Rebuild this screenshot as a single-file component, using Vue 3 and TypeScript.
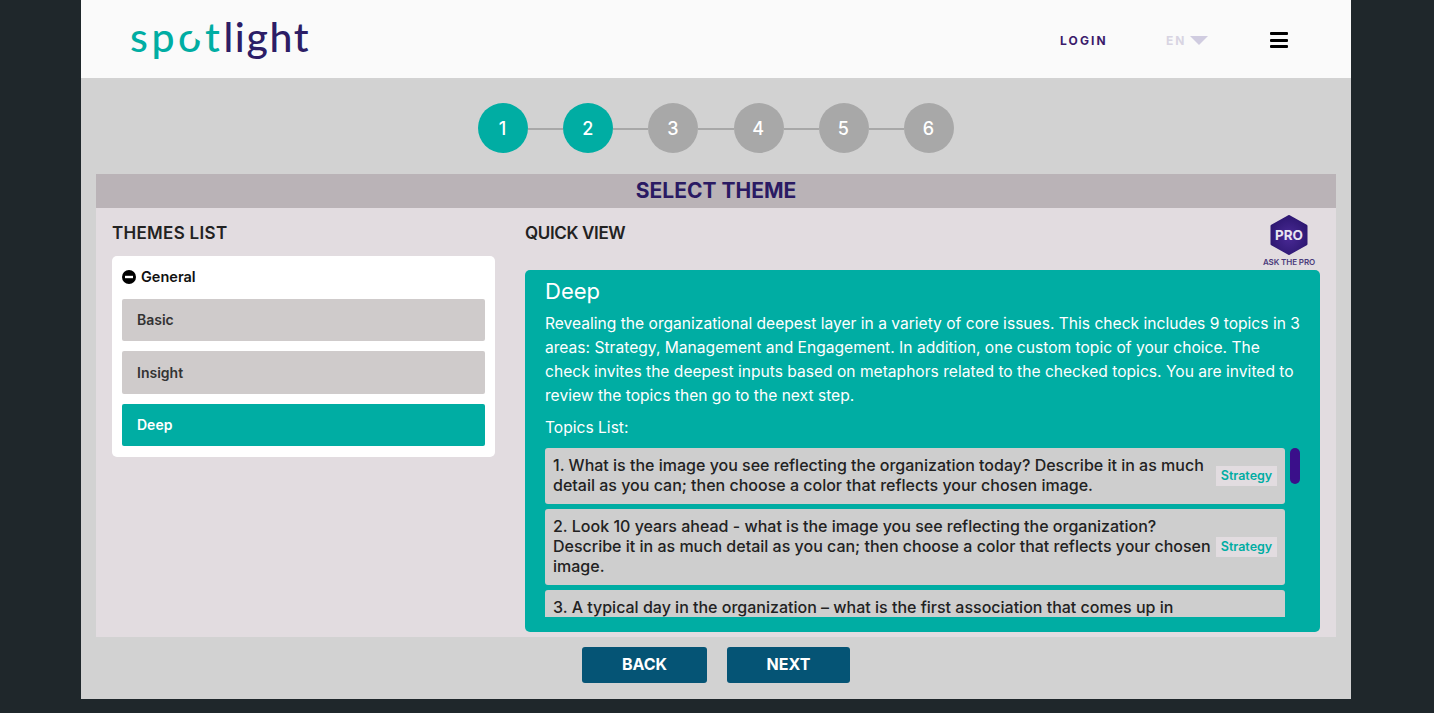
<script setup lang="ts">
const steps = [
  { n: 1, on: true },
  { n: 2, on: true },
  { n: 3, on: false },
  { n: 4, on: false },
  { n: 5, on: false },
  { n: 6, on: false },
]
const themes = [
  { name: 'Basic', on: false },
  { name: 'Insight', on: false },
  { name: 'Deep', on: true },
]
const topics = [
  { text: '1. What is the image you see reflecting the organization today? Describe it in as much detail as you can; then choose a color that reflects your chosen image.', tag: true },
  { text: '2. Look 10 years ahead - what is the image you see reflecting the organization? Describe it in as much detail as you can; then choose a color that reflects your chosen image.', tag: true },
  { text: '3. A typical day in the organization – what is the first association that comes up in', tag: false },
]
</script>

<template>
  <div class="shell">
    <header class="top">
      <div class="logo">
        <span class="teal spot">sp<span class="o">o<i class="gap"></i></span>t</span><span class="navy light">light</span>
      </div>
      <nav class="nav">
        <a class="login">LOGIN</a>
        <span class="lang">EN<i class="caret"></i></span>
        <span class="burger"><i></i><i></i><i></i></span>
      </nav>
    </header>

    <main class="main">
      <div class="steps">
        <template v-for="(s, i) in steps" :key="s.n">
          <span v-if="i > 0" class="line"></span>
          <span class="dot" :class="{ on: s.on }">{{ s.n }}</span>
        </template>
      </div>

      <section class="panel">
        <h1 class="bar">SELECT THEME</h1>
        <div class="cols">
          <div class="left">
            <h2 class="head themes">THEMES LIST</h2>
            <div class="card">
              <div class="group">
                <svg class="minus" viewBox="0 0 14 14" width="14" height="14">
                  <circle cx="7" cy="7" r="7" fill="#000" />
                  <rect x="3" y="5.8" width="8" height="2.4" fill="#fff" />
                </svg>
                General
              </div>
              <div v-for="t in themes" :key="t.name" class="theme" :class="{ on: t.on }">{{ t.name }}</div>
            </div>
          </div>

          <div class="right">
            <div class="rhead">
              <h2 class="head quick">QUICK VIEW</h2>
              <div class="pro">
                <svg viewBox="0 0 38 40" width="38" height="40">
                  <defs>
                    <radialGradient id="hex" cx="50%" cy="55%" r="60%">
                      <stop offset="0" stop-color="#4a2a96" />
                      <stop offset="1" stop-color="#2c1670" />
                    </radialGradient>
                  </defs>
                  <polygon points="19,1.5 36,11 36,29 19,38.5 2,29 2,11" fill="url(#hex)" stroke="url(#hex)" stroke-width="3" stroke-linejoin="round" />
                  <text x="19" y="25" text-anchor="middle" class="protxt">PRO</text>
                </svg>
                <span class="ask">ASK THE PRO</span>
              </div>
            </div>

            <div class="view">
              <h3 class="title">Deep</h3>
              <p class="desc">Revealing the organizational deepest layer in a variety of core issues. This check includes 9 topics in 3 areas: Strategy, Management and Engagement. In addition, one custom topic of your choice. The check invites the deepest inputs based on metaphors related to the checked topics. You are invited to review the topics then go to the next step.</p>
              <p class="tl">Topics List:</p>
              <div class="scroll">
                <div class="list">
                  <div v-for="t in topics" :key="t.text" class="item" :class="{ cut: !t.tag }">
                    <span class="q">{{ t.text }}</span>
                    <span v-if="t.tag" class="tag">Strategy</span>
                  </div>
                </div>
                <div class="track"><i class="thumb"></i></div>
              </div>
            </div>
          </div>
        </div>
      </section>

      <div class="actions">
        <button class="btn back">BACK</button>
        <button class="btn next">NEXT</button>
      </div>
    </main>
  </div>
</template>

<style>
html, body { margin: 0; background: #1f272b; overflow: hidden; }
</style>

<style scoped>
.shell { width: 1270px; height: 699px; margin: 0 0 0 81px; display: flex; flex-direction: column; font-family: Inter, "Noto Sans", sans-serif; background: #d2d2d2; color: #222; }
.top { height: 78px; flex: none; background: #fafafa; display: flex; align-items: center; justify-content: space-between; padding: 0 63px 0 49px; }
.logo { font-family: Lato, "Open Sans", sans-serif; font-size: 41px; line-height: 44px; margin-top: -5px; font-weight: 500; white-space: nowrap; }
.teal { color: #00ada3; }
.navy { color: #2c1d66; }
.spot { letter-spacing: 3.6px; }
.light { letter-spacing: 1.6px; }
.o { position: relative; display: inline-block; }
.gap { position: absolute; right: 2px; top: 14px; width: 11px; height: 10px; background: #fafafa; transform: rotate(30deg); }
.nav { display: flex; align-items: center; margin-top: 2px; }
.login { font-size: 12px; font-weight: 700; letter-spacing: 2.1px; color: #3b1a6b; width: 106px; }
.lang { font-size: 12px; font-weight: 700; letter-spacing: 2px; color: #d8d4e2; display: flex; align-items: center; width: 104px; }
.caret { width: 0; height: 0; border-left: 9px solid transparent; border-right: 9px solid transparent; border-top: 9px solid #d0cce0; margin-left: 4px; }
.burger { width: 18px; display: flex; flex-direction: column; gap: 3.5px; }
.burger i { display: block; height: 3px; background: #000; border-radius: 1px; }

.main { flex: 1; display: flex; flex-direction: column; align-items: center; padding: 25px 15px 0; min-height: 0; }
.steps { display: flex; align-items: center; height: 50px; flex: none; }
.dot { width: 50px; height: 50px; box-sizing: border-box; padding-right: 1px; border-radius: 50%; background: #a8a8a8; color: #fff; font-size: 18px; font-weight: 500; display: flex; align-items: center; justify-content: center; flex: none; }
.dot.on { background: #00ada3; }
.line { width: 35.2px; height: 2px; background: #a8a8a8; margin-top: 1px; }

.panel { width: 100%; margin-top: 21px; height: 463px; flex: none; background: #e2dce0; display: flex; flex-direction: column; }
.bar { margin: 0; height: 34px; flex: none; background: #bab3b7; color: #2a1a63; font-size: 21px; line-height: 34px; font-weight: 700; text-align: center; }
.cols { flex: 1; display: flex; padding: 0 16px; gap: 30px; min-height: 0; }
.left { width: 383px; flex: none; }
.head { margin: 0; font-size: 17px; line-height: 24px; font-weight: 600; color: #222; }
.themes { letter-spacing: 0.3px; }
.quick { letter-spacing: -0.35px; }
.left .head { margin-top: 13px; }
.card { margin-top: 11px; background: #fff; border-radius: 5px; padding: 10px; display: flex; flex-direction: column; gap: 10px; height: 201px; box-sizing: border-box; }
.group { display: flex; align-items: center; gap: 5px; font-size: 14.5px; line-height: 22px; font-weight: 600; color: #111; margin-bottom: 1px; height: 22px; }
.theme { height: 42.4px; background: #cfcbcb; border-radius: 2px; padding: 0 15px 1px; box-sizing: border-box; display: flex; align-items: center; font-size: 14px; font-weight: 600; color: #333; }
.theme.on { background: #00ada3; color: #fff; }

.right { flex: 1; min-width: 0; display: flex; flex-direction: column; }
.rhead { height: 62px; flex: none; display: flex; justify-content: space-between; }
.rhead .head { margin-top: 13px; }
.pro { width: 54px; margin-top: 7px; display: flex; flex-direction: column; align-items: center; margin-right: 4px; }
.protxt { fill: #e8e4f0; font-family: Inter, sans-serif; font-size: 13.5px; font-weight: 700; }
.ask { font-size: 8px; line-height: 10px; margin-top: 2px; font-weight: 600; color: #4a3a7a; white-space: nowrap; letter-spacing: -0.1px; }

.view { flex: 1; min-height: 0; margin-bottom: 5px; background: #00ada3; border-radius: 5px; padding: 7px 20px 15px; color: #fff; display: flex; flex-direction: column; }
.title { margin: 0; font-size: 22px; line-height: 28px; font-weight: 400; }
.desc { margin: 7px 0 0; font-size: 15.6px; line-height: 24px; }
.tl { margin: 8px 0 0; font-size: 15.6px; line-height: 24px; }
.scroll { margin-top: 8px; flex: 1; min-height: 0; display: flex; gap: 5px; }
.list { width: 740px; flex: none; display: flex; flex-direction: column; gap: 5px; overflow: hidden; }
.item { flex: none; background: #cecece; border-radius: 3px; padding: 7px 8px 9px; display: flex; align-items: center; gap: 5px; color: #222; }
.item.cut { padding-bottom: 0; border-radius: 3px 3px 0 0; }
.q { flex: 1; font-size: 16px; line-height: 20px; font-weight: 500; }
.tag { flex: none; width: 61px; height: 20px; box-sizing: border-box; background: #e2dce0; color: #00ada3; font-size: 12.5px; line-height: 20px; font-weight: 600; text-align: center; margin-top: 2px; }
.track { width: 10px; flex: none; }
.thumb { display: block; width: 10px; height: 36px; border-radius: 5px; background: #3a0f8a; }

.actions { display: flex; gap: 20px; margin-top: 10px; justify-content: center; }
.btn { height: 36px; border: 0; border-radius: 3px; background: #055475; color: #fff; font-family: Inter, sans-serif; font-size: 16px; line-height: 20px; font-weight: 700; padding: 0 0 2px; }
.back { width: 125px; }
.next { width: 123px; }
</style>
